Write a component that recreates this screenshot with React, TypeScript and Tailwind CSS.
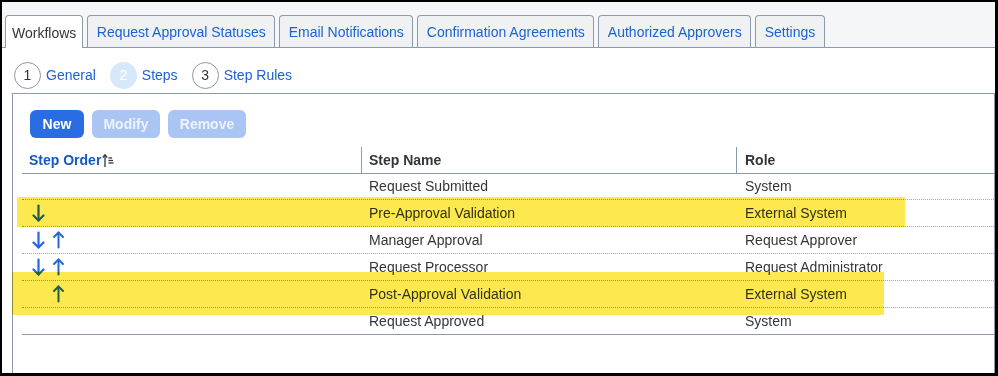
import React from "react";

const tabs = [
  "Workflows",
  "Request Approval Statuses",
  "Email Notifications",
  "Confirmation Agreements",
  "Authorized Approvers",
  "Settings",
];

function Arrow({ dir }: { dir: "up" | "down" }) {
  return (
    <svg width="13" height="18" viewBox="0 0 13 18" className="block">
      {dir === "down" ? (
        <g fill="none" stroke="#2367e0" strokeWidth="2.2" strokeLinecap="round" strokeLinejoin="round">
          <line x1="6.5" y1="1.5" x2="6.5" y2="16.5" />
          <polyline points="1.5,11.5 6.5,16.5 11.5,11.5" />
        </g>
      ) : (
        <g fill="none" stroke="#2367e0" strokeWidth="2" strokeLinecap="round" strokeLinejoin="round">
          <line x1="6.5" y1="1.5" x2="6.5" y2="16.5" />
          <polyline points="2,6 6.5,1.5 11,6" />
        </g>
      )}
    </svg>
  );
}

const rows: { arrows: ("up" | "down" | "none")[]; name: string; role: string }[] = [
  { arrows: [], name: "Request Submitted", role: "System" },
  { arrows: ["down"], name: "Pre-Approval Validation", role: "External System" },
  { arrows: ["down", "up"], name: "Manager Approval", role: "Request Approver" },
  { arrows: ["down", "up"], name: "Request Processor", role: "Request Administrator" },
  { arrows: ["none", "up"], name: "Post-Approval Validation", role: "External System" },
  { arrows: [], name: "Request Approved", role: "System" },
];

export default function App() {
  return (
    <div
      className="relative w-[998px] h-[376px] bg-white border-l-2 border-t-2 border-r-[3px] border-b-[3px] border-black overflow-hidden flex flex-col text-[14px] text-[#32363a]"
      style={{ fontFamily: '"Liberation Sans", Arial, sans-serif' }}
    >
      {/* Tab strip */}
      <div className="h-[46px] shrink-0 bg-[#f5f6f7] border-b border-[#8c9bab] flex items-end gap-[4px] pl-[3px]">
        {tabs.map((t, i) =>
          i === 0 ? (
            <div
              key={t}
              className="h-[33px] -mb-px bg-white border border-b-0 border-[#8c9bab] rounded-t-[4px] px-[6px] pt-[2px] flex items-center text-[#32363a]"
            >
              {t}
            </div>
          ) : (
            <div
              key={t}
              className="h-[32px] bg-[#eff1f3] border border-b-0 border-[#8c9bab] rounded-t-[4px] px-[8.5px] pt-[2px] flex items-center text-[#1b63d4]"
            >
              {t}
            </div>
          )
        )}
      </div>

      {/* Steps */}
      <div className="h-[45px] shrink-0 flex items-center pl-[12px] pt-[9px]">
        <div className="w-[27px] h-[27px] rounded-full border border-[#8f969e] flex items-center justify-center text-[#32363a]">
          1
        </div>
        <span className="ml-[5px] text-[#1b63d4]">General</span>
        <div className="ml-[14px] w-[27px] h-[27px] rounded-full bg-[#d8e8fb] flex items-center justify-center text-white">
          2
        </div>
        <span className="ml-[5px] text-[#1b63d4]">Steps</span>
        <div className="ml-[14px] w-[27px] h-[27px] rounded-full border border-[#8f969e] flex items-center justify-center text-[#32363a]">
          3
        </div>
        <span className="ml-[5px] text-[#1b63d4]">Step Rules</span>
      </div>

      {/* Panel */}
      <div className="flex-1 ml-[10px] border-l border-t border-r border-[#8c9bab] flex flex-col">
        <div className="pt-[16px] pl-[17px] flex gap-[8px]">
          <button className="h-[28px] w-[54px] rounded-[6px] bg-[#2a6de3] text-white font-bold">New</button>
          <button className="h-[28px] w-[68px] rounded-[6px] bg-[#aac5f4] text-[#eef3fd] font-bold">Modify</button>
          <button className="h-[28px] w-[78px] rounded-[6px] bg-[#aac5f4] text-[#eef3fd] font-bold">Remove</button>
        </div>

        <div className="ml-[9px] mt-[9px]">
          {/* Header */}
          <div className="flex h-[27px] border-b border-[#8c9bab]">
            <div className="w-[339px] flex items-center pl-[7px] font-bold text-[#1558c4]">
              Step Order
              <svg width="12" height="15" viewBox="0 0 12 15" className="ml-[1px]">
                <g fill="none" stroke="#32363a" strokeWidth="1.3">
                  <line x1="3" y1="2" x2="3" y2="14" />
                  <polyline points="0.8,4.5 3,1.8 5.2,4.5" />
                  <line x1="6.5" y1="5" x2="10" y2="5" />
                  <line x1="6.5" y1="7.5" x2="11" y2="7.5" />
                  <line x1="6.5" y1="10" x2="11.5" y2="10" />
                </g>
              </svg>
            </div>
            <div className="w-[375px] border-l border-[#8c9bab] flex items-center pl-[7px] font-bold">Step Name</div>
            <div className="flex-1 border-l border-[#8c9bab] flex items-center pl-[8px] font-bold">Role</div>
          </div>
          {rows.map((r, i) => (
            <div
              key={r.name}
              className={
                "flex " +
                (i === rows.length - 1
                  ? "h-[27px] border-b border-[#8c9bab]"
                  : i === 0
                  ? "h-[26px] border-b border-dotted border-[#9aa6b6]"
                  : "h-[27px] border-b border-dotted border-[#9aa6b6]")
              }
            >
              <div className="w-[339px] flex items-center pl-[10px] gap-[7px]">
                {r.arrows.map((a, j) =>
                  a === "none" ? <div key={j} className="w-[13px]" /> : <Arrow key={j} dir={a} />
                )}
              </div>
              <div className="w-[375px] flex items-center pl-[8px]">{r.name}</div>
              <div className="flex-1 flex items-center pl-[9px]">{r.role}</div>
            </div>
          ))}
        </div>
      </div>

      {/* Highlighter annotations */}
      <div className="absolute left-[15px] top-[195px] w-[888px] h-[30px] bg-[#fde84f] mix-blend-multiply pointer-events-none" />
      <div className="absolute left-[10px] top-[270px] w-[872px] h-[43px] bg-[#fde84f] mix-blend-multiply pointer-events-none" />
    </div>
  );
}
